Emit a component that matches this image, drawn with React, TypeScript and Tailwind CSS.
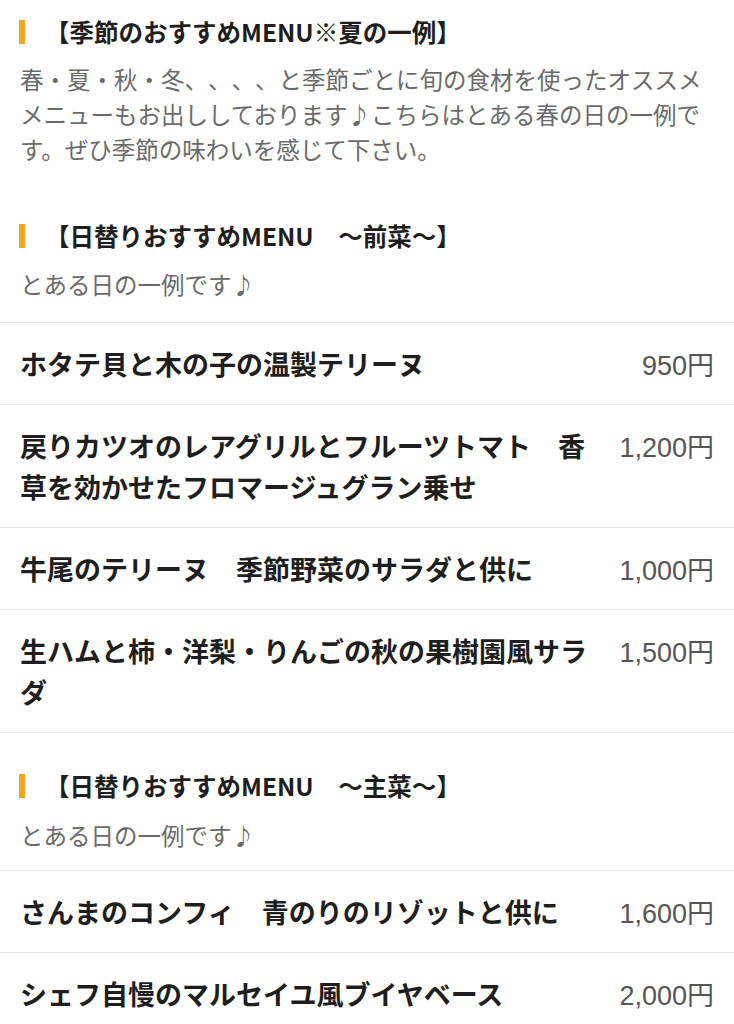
const jp = "font-['Noto_Sans_CJK_JP',sans-serif]";

type Item = { name: string; price: string };

const starters: Item[] = [
  { name: 'ホタテ貝と木の子の温製テリーヌ', price: '950' },
  { name: '戻りカツオのレアグリルとフルーツトマト　香草を効かせたフロマージュグラン乗せ', price: '1,200' },
  { name: '牛尾のテリーヌ　季節野菜のサラダと供に', price: '1,000' },
  { name: '生ハムと柿・洋梨・りんごの秋の果樹園風サラダ', price: '1,500' },
];

const mains: Item[] = [
  { name: 'さんまのコンフィ　青のりのリゾットと供に', price: '1,600' },
  { name: 'シェフ自慢のマルセイユ風ブイヤベース', price: '2,000' },
];

function Heading({ children }: { children: React.ReactNode }) {
  return (
    <div className="flex items-center px-[19px] h-[36px]">
      <span className="w-[6px] h-[24px] bg-[#f3a51b] shrink-0" />
      <h2 className="ml-[20px] text-[24.5px] leading-[36px] font-bold text-[#1e1e1e] whitespace-nowrap">
        {children}
      </h2>
    </div>
  );
}

function Note({ children }: { children: React.ReactNode }) {
  return <p className="px-5 text-[23.5px] leading-[35px] text-[#6a6a6a]">{children}</p>;
}

function MenuList({ items }: { items: Item[] }) {
  return (
    <ul className="border-b border-[#e3e3e3]">
      {items.map((item) => (
        <li key={item.name} className="flex items-start border-t border-[#e3e3e3] px-5 py-5">
          <span className="flex-1 text-[27px] leading-[41px] font-bold text-[#1e1e1e]">{item.name}</span>
          <span className="block h-[41px] w-[96px] ml-5 text-right text-[27px] leading-[41px] text-[#555] whitespace-nowrap">
            <span className="font-['Liberation_Sans',sans-serif]">{item.price}</span>円
          </span>
        </li>
      ))}
    </ul>
  );
}

export default function App() {
  return (
    <div className={`${jp} [text-spacing-trim:space-all] bg-white w-[734px] min-h-screen pt-[14px] overflow-hidden`}>
      {/* 季節のおすすめ */}
      <section className="pb-[16px]">
        <Heading>【季節のおすすめMENU※夏の一例】</Heading>
        <div className="mt-3">
          <Note>
            春・夏・秋・冬、、、、と季節ごとに旬の食材を使ったオススメメニューもお出ししております♪こちらはとある春の日の一例です。ぜひ季節の味わいを感じて下さい。
          </Note>
        </div>
      </section>

      {/* 前菜 */}
      <section className="pt-[35px]">
        <Heading>【日替りおすすめMENU　～前菜～】</Heading>
        <div className="mt-[13px] mb-[20px]">
          <Note>とある日の一例です♪</Note>
        </div>
        <MenuList items={starters} />
      </section>

      {/* 主菜 */}
      <section className="pt-[35px]">
        <Heading>【日替りおすすめMENU　～主菜～】</Heading>
        <div className="mt-[14px] mb-[17px]">
          <Note>とある日の一例です♪</Note>
        </div>
        <MenuList items={mains} />
      </section>
    </div>
  );
}
